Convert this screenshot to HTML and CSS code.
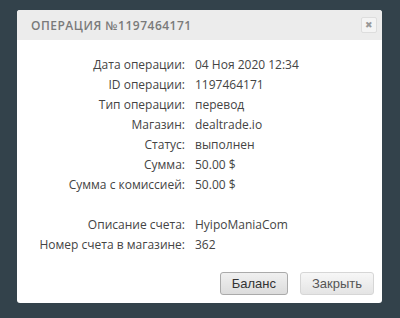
FILE: index.html
```html
<!DOCTYPE html>
<html>
<head>
    <title>Операция</title>
    <link rel="stylesheet" href="styles.css">
</head>
<body>
    <div class="modal">
        <div class="modal-header">
            <h1>Операция №1197464171</h1>
            <span class="close">&#10006;</span>
        </div>
        <div class="modal-body">
            <div class="details">
                <span class="label">Дата операции:</span><span class="value">04 Ноя 2020 12:34</span>
                <span class="label">ID операции:</span><span class="value">1197464171</span>
                <span class="label">Тип операции:</span><span class="value">перевод</span>
                <span class="label">Магазин:</span><span class="value">dealtrade.io</span>
                <span class="label">Статус:</span><span class="value">выполнен</span>
                <span class="label">Сумма:</span><span class="value">50.00 $</span>
                <span class="label">Сумма с комиссией:</span><span class="value">50.00 $</span>
                <span class="spacer"></span><span class="spacer"></span>
                <span class="label">Описание счета:</span><span class="value">HyipoManiaCom</span>
                <span class="label">Номер счета в магазине:</span><span class="value">362</span>
            </div>
        </div>
        <div class="modal-footer">
            <button class="btn btn-active">Баланс</button>
            <button class="btn">Закрыть</button>
        </div>
    </div>
</body>
</html>
```

FILE: styles.css
```css
/* Reset */
body, h1, p {
    margin: 0;
    padding: 0;
}

body {
    background-color: #33424b;
    font-family: "Open Sans", Arial, sans-serif;
    padding: 10px 18px 14px 17px;
}

.modal {
    width: 365px;
    background-color: #fff;
    border-radius: 3px;
}

/* Header */
.modal-header {
    height: 30px;
    background-color: #ececec;
    border-radius: 3px 3px 0 0;
    display: flex;
    align-items: center;
    justify-content: space-between;
    padding: 0 5px 0 14px;
}

.modal-header h1 {
    font-size: 12px;
    font-weight: 600;
    color: #7a7a7a;
    text-transform: uppercase;
    letter-spacing: 0.5px;
}

.close {
    width: 14px;
    height: 14px;
    border: 1px solid #ddd;
    border-radius: 2px;
    background-color: #f4f4f4;
    color: #999;
    font-size: 9px;
    line-height: 14px;
    text-align: center;
}

/* Details */
.modal-body {
    padding-top: 14px;
}

.details {
    display: grid;
    grid-template-columns: 168px 1fr;
    column-gap: 10px;
    grid-auto-rows: 20px;
    align-items: center;
    font-size: 12px;
    color: #444;
}

.label {
    text-align: right;
}

/* Buttons */
.modal-footer {
    display: flex;
    justify-content: flex-end;
    gap: 12px;
    padding: 18px 8px 8px 0;
}

.btn {
    height: 23px;
    padding: 0 11px;
    font-family: "Liberation Sans", Arial, sans-serif;
    font-size: 13px;
    color: #555;
    background: linear-gradient(#f7f7f7, #e4e4e4);
    border: 1px solid #d6d6d6;
    border-radius: 3px;
}

.btn-active {
    color: #333;
    border-color: #aaa;
    background: linear-gradient(#f0f0f0, #dcdcdc);
}
```
